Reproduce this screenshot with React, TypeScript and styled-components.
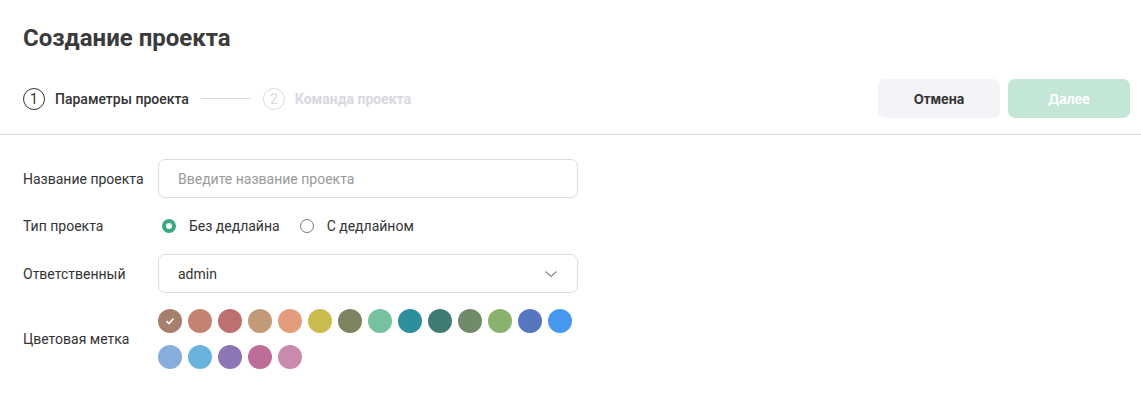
import React from "react";
import styled, { createGlobalStyle } from "styled-components";

const GlobalStyle = createGlobalStyle`
    html, body {
        margin: 0;
        padding: 0;
        background: #ffffff;
        font-family: Roboto, "Noto Sans", sans-serif;
        color: #333333;
    }
`;

const Page = styled.div`
    width: 1141px;
    height: 393px;
    overflow: hidden;
    background: #fff;
`;

const Header = styled.div`
    padding: 22px 11px 0 23px;
    border-bottom: 1px solid #d9d9d9;
`;

const Title = styled.h1`
    margin: 0;
    font-size: 24px;
    line-height: 32px;
    font-weight: 700;
    color: #3b3b3b;
`;

const StepBar = styled.div`
    display: flex;
    align-items: center;
    justify-content: space-between;
    margin-top: 25px;
    padding-bottom: 16px;
`;

const Steps = styled.div`
    display: flex;
    align-items: center;
`;

const Step = styled.div<{ $active?: boolean }>`
    display: flex;
    align-items: center;
    gap: 10px;
    font-size: 14px;
    font-weight: ${(p) => (p.$active ? 500 : 700)};
    color: ${(p) => (p.$active ? "#333" : "#d8d8e0")};
`;

const StepNum = styled.span<{ $active?: boolean }>`
    display: flex;
    align-items: center;
    justify-content: center;
    width: 20px;
    height: 20px;
    border-radius: 50%;
    border: 1px solid ${(p) => (p.$active ? "#333" : "#dcdce2")};
    font-size: 14px;
    font-weight: 400;
`;

const StepLine = styled.div`
    width: 50px;
    height: 1px;
    background: #d9d9de;
    margin: 0 12px;
`;

const Buttons = styled.div`
    display: flex;
    gap: 8px;
`;

const Button = styled.button<{ $primary?: boolean }>`
    width: 122px;
    height: 39px;
    border: none;
    border-radius: 7px;
    font-family: Inter, Roboto, sans-serif;
    font-size: 13px;
    font-weight: 700;
    cursor: pointer;
    background: ${(p) => (p.$primary ? "#c3e6d7" : "#f3f4f8")};
    color: ${(p) => (p.$primary ? "#ffffff" : "#333333")};
`;

const Form = styled.div`
    display: flex;
    flex-direction: column;
    gap: 16px;
    padding: 24px 23px 0;
`;

const Row = styled.div`
    display: flex;
    align-items: center;
`;

const Label = styled.div`
    width: 135px;
    flex-shrink: 0;
    font-size: 14px;
    color: #333;
`;

const Field = styled.div`
    width: 420px;
    height: 39px;
    box-sizing: border-box;
    border: 1px solid #dcdcdc;
    border-radius: 7px;
    display: flex;
    align-items: center;
    justify-content: space-between;
    padding: 0 19px;
    font-size: 14px;
`;

const Input = styled.input`
    border: none;
    outline: none;
    padding: 0;
    width: 100%;
    font-family: Roboto, sans-serif;
    font-size: 14px;
    color: #333;
    &::placeholder {
        color: #9a9a9a;
    }
`;

const Radios = styled.div`
    display: flex;
    align-items: center;
    gap: 20px;
    height: 24px;
    padding-left: 4px;
`;

const RadioItem = styled.label`
    display: flex;
    align-items: center;
    gap: 13px;
    font-size: 14px;
    color: #333;
`;

const RadioDot = styled.span<{ $checked?: boolean }>`
    width: 14px;
    height: 14px;
    box-sizing: border-box;
    border-radius: 50%;
    border: ${(p) => (p.$checked ? "4.5px solid #3ba784" : "1px solid #777")};
    background: #fff;
`;

const Swatches = styled.div`
    width: 420px;
    display: flex;
    flex-wrap: wrap;
    gap: 12px 6px;
`;

const Swatch = styled.div<{ $color: string }>`
    width: 24px;
    height: 24px;
    border-radius: 50%;
    background: ${(p) => p.$color};
    display: flex;
    align-items: center;
    justify-content: center;
`;

const colors = [
    "#a67f6d", "#c48372", "#bd6f72", "#c39a78", "#e39c7b", "#c9bb4e", "#7d8560",
    "#75c1a0", "#2c8f9b", "#3f7b72", "#718a6a", "#8ab26f", "#5676bf", "#4697f0",
    "#87aedb", "#68b4dc", "#8e76b4", "#bd6d98", "#c98aae",
];

export default function App() {
    return (
        <Page>
            <GlobalStyle />
            <Header>
                <Title>Создание проекта</Title>
                <StepBar>
                    <Steps>
                        <Step $active>
                            <StepNum $active>1</StepNum>
                            Параметры проекта
                        </Step>
                        <StepLine />
                        <Step>
                            <StepNum>2</StepNum>
                            Команда проекта
                        </Step>
                    </Steps>
                    <Buttons>
                        <Button>Отмена</Button>
                        <Button $primary>Далее</Button>
                    </Buttons>
                </StepBar>
            </Header>
            <Form>
                <Row>
                    <Label>Название проекта</Label>
                    <Field>
                        <Input placeholder="Введите название проекта" />
                    </Field>
                </Row>
                <Row>
                    <Label>Тип проекта</Label>
                    <Radios>
                        <RadioItem>
                            <RadioDot $checked />
                            Без дедлайна
                        </RadioItem>
                        <RadioItem>
                            <RadioDot />
                            С дедлайном
                        </RadioItem>
                    </Radios>
                </Row>
                <Row>
                    <Label>Ответственный</Label>
                    <Field>
                        admin
                        <svg width="14" height="14" viewBox="0 0 14 14" fill="none">
                            <path d="M1.5 4.5L7 9.5L12.5 4.5" stroke="#8a8a8a" strokeWidth="1.2" />
                        </svg>
                    </Field>
                </Row>
                <Row>
                    <Label>Цветовая метка</Label>
                    <Swatches>
                        {colors.map((c, i) => (
                            <Swatch key={c} $color={c}>
                                {i === 0 && (
                                    <svg width="10" height="10" viewBox="0 0 10 10" fill="none">
                                        <path d="M1.5 5.2L4 7.5L8.5 2.5" stroke="#fff" strokeWidth="1.6" />
                                    </svg>
                                )}
                            </Swatch>
                        ))}
                    </Swatches>
                </Row>
            </Form>
        </Page>
    );
}
